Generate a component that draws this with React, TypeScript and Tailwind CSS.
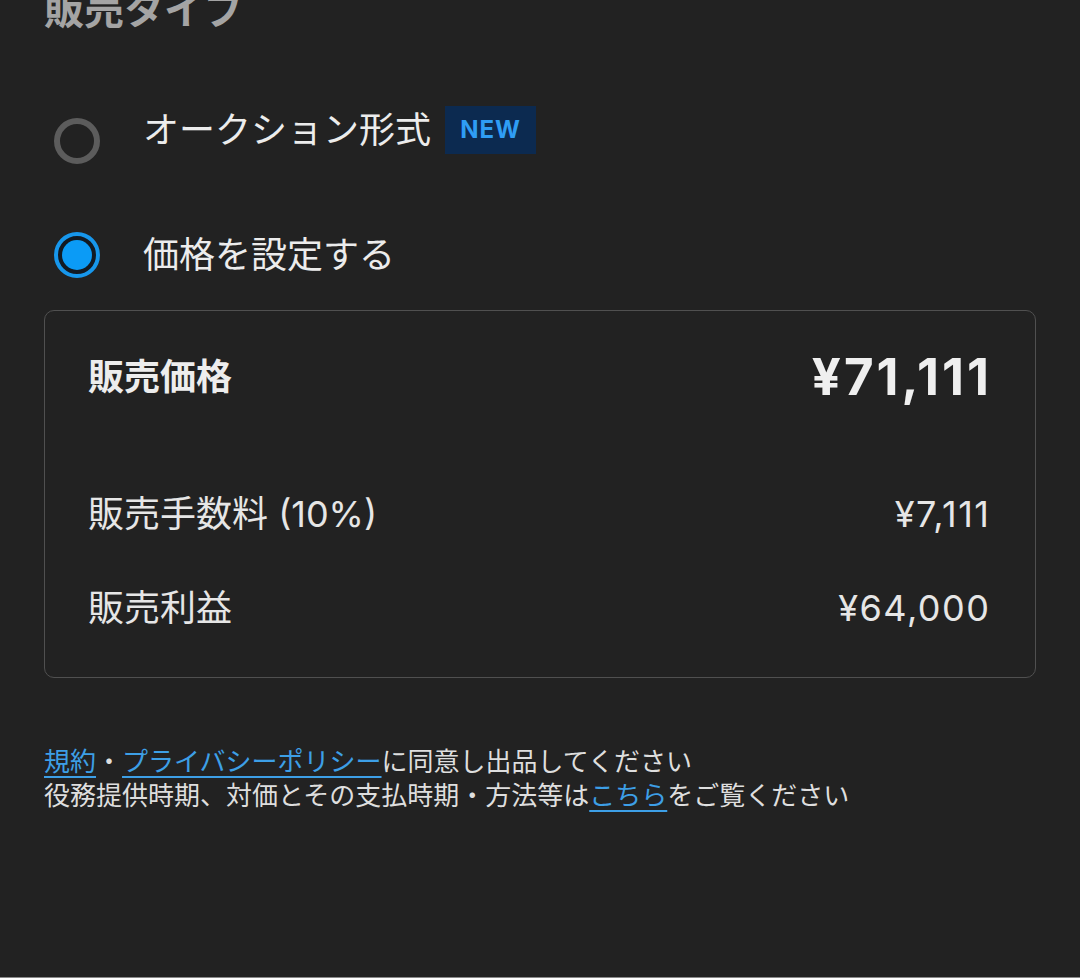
import React from "react";

const font = { fontFamily: '"Inter", "Noto Sans CJK JP", sans-serif' };

function Radio({ checked }: { checked?: boolean }) {
  if (!checked) {
    return <div className="h-[46px] w-[46px] shrink-0 rounded-full border-[6px] border-[#5c5c5c]" />;
  }
  return (
    <div className="flex h-[46px] w-[46px] shrink-0 items-center justify-center rounded-full border-[4px] border-[#1797ec] bg-[#121a23]">
      <div className="h-[30px] w-[30px] rounded-full bg-[#0b9bf6]" />
    </div>
  );
}

function Row({ label, value, strong }: { label: string; value: string; strong?: boolean }) {
  return (
    <div className="flex h-[60px] items-center justify-between">
      <span className={strong ? "text-[36px] font-bold text-[#ededed]" : "text-[36px] text-[#e6e6e6]"}>
        {label}
      </span>
      <span
        className={
          strong
            ? "-mr-[3px] text-[51px] font-bold tracking-[3px] text-[#efefef]"
            : "-mr-[1.5px] text-[36px] tracking-[1.5px] text-[#e6e6e6]"
        }
      >
        {value}
      </span>
    </div>
  );
}

export default function App() {
  return (
    <div
      className="h-[978px] overflow-hidden border-b border-[#8a8a8a] bg-[#222222] pl-[44px] pr-[44px]"
      style={font}
    >
      <div className="-mt-[10px] h-[40px] text-[40px] font-semibold leading-[40px] text-[#a4a4a4]">
        販売タイプ
      </div>

      <div className="mt-[70px] flex h-[60px] items-center">
        <div className="ml-[10px] mt-[22px]">
          <Radio />
        </div>
        <span className="ml-[43px] text-[36px] leading-none text-[#ececec]">オークション形式</span>
        <span className="ml-[14px] flex h-[48px] w-[91px] items-center justify-center bg-[#0c2a50] text-[24px] font-bold tracking-[1px] text-[#2f9df4]">
          NEW
        </span>
      </div>

      <div className="mt-[65px] flex h-[60px] items-center">
        <div className="ml-[10px]">
          <Radio checked />
        </div>
        <span className="ml-[43px] text-[36px] leading-none text-[#ececec]">価格を設定する</span>
      </div>

      <div className="mt-[25px] rounded-[10px] border border-[#505050] pb-[39px] pl-[43px] pr-[46px] pt-[36px]">
        <Row label="販売価格" value="¥71,111" strong />
        <div className="mt-[77px]">
          <Row label="販売手数料 (10%)" value="¥7,111" />
        </div>
        <div className="mt-[34px]">
          <Row label="販売利益" value="¥64,000" />
        </div>
      </div>

      <div className="mt-[67px] text-[26px] leading-[34px] text-[#dedede]">
        <div>
          <a className="text-[#3d9fe6] underline underline-offset-[5px]">規約</a>・
          <a className="text-[#3d9fe6] underline underline-offset-[5px]">プライバシーポリシー</a>
          に同意し出品してください
        </div>
        <div>
          役務提供時期、対価とその支払時期・方法等は
          <a className="text-[#3d9fe6] underline underline-offset-[5px]">こちら</a>
          をご覧ください
        </div>
      </div>
    </div>
  );
}
